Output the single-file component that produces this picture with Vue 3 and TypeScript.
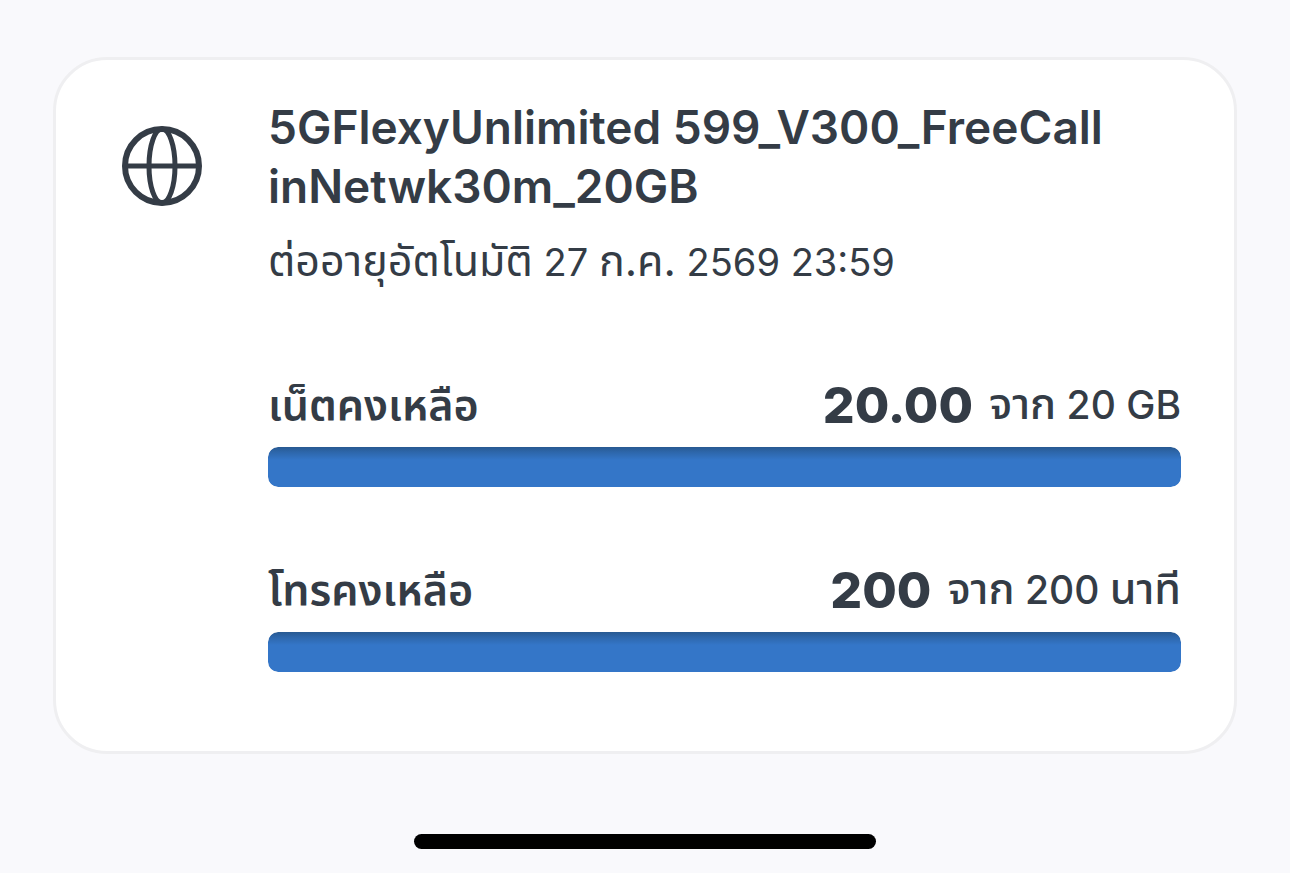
<script setup lang="ts">
interface Piece {
  text: string
  thai: boolean
}

interface Quota {
  id: string
  label: string
  remaining: string
  total: number
  unit: string
}

const titleLines: string[] = ['5GFlexyUnlimited 599_V300_FreeCall', 'inNetwk30m_20GB']
const renewal = 'ต่ออายุอัตโนมัติ 27 ก.ค. 2569 23:59'

const quotas: Quota[] = [
  { id: 'data', label: 'เน็ตคงเหลือ', remaining: '20.00', total: 20, unit: 'GB' },
  { id: 'voice', label: 'โทรคงเหลือ', remaining: '200', total: 200, unit: 'นาที' },
]

const percent = (q: Quota): number => (Number(q.remaining) / q.total) * 100

// Thai letters are set a little larger than the Latin text and digits beside them.
const pieces = (text: string): Piece[] =>
  text
    .split(/([\u0E00-\u0E7F.]+)/)
    .filter((t) => t !== '')
    .map((t) => ({ text: t, thai: /[\u0E00-\u0E7F]/.test(t) }))
</script>

<template>
  <div class="screen">
    <main class="card">
      <svg class="globe" viewBox="0 0 80 80" aria-hidden="true">
        <circle cx="40" cy="40" r="37" />
        <ellipse cx="40" cy="40" rx="13" ry="37" />
        <path d="M3 40H77" />
      </svg>
      <div class="details">
        <h1 class="title">
          <span v-for="line in titleLines" :key="line" class="line">{{ line }}</span>
        </h1>
        <p class="renewal"><span v-for="(p, i) in pieces(renewal)" :key="i" :class="{ thai: p.thai }">{{ p.text }}</span></p>
        <section v-for="q in quotas" :key="q.id" class="quota">
          <div class="row">
            <span :id="q.id" class="label thai">{{ q.label }}</span>
            <span class="amount">
              <strong class="value">{{ q.remaining }}</strong>
              <span class="total"><span v-for="(p, i) in pieces(`จาก ${q.total} ${q.unit}`)" :key="i" :class="{ thai: p.thai }">{{ p.text }}</span></span>
            </span>
          </div>
          <div
            class="track"
            role="progressbar"
            :aria-labelledby="q.id"
            :aria-valuenow="Number(q.remaining)"
            :aria-valuemax="q.total"
          >
            <div class="fill" :style="{ width: percent(q) + '%' }"></div>
          </div>
        </section>
      </div>
    </main>
    <div class="home-indicator"></div>
  </div>
</template>

<style>
body {
  background: #f9f9fc;
}
</style>

<style scoped>
.screen {
  box-sizing: border-box;
  display: flex;
  flex-direction: column;
  justify-content: space-between;
  min-height: 100vh;
  padding: 57px 53px 24px;
  background: #f9f9fc;
  color: #343c46;
  font-family: Inter, "Noto Sans Thai", "Noto Sans", sans-serif;
}
.card {
  display: flex;
  align-items: flex-start;
  gap: 66px;
  padding: 38px 53px 79px 66px;
  border: 3px solid #efeff1;
  border-radius: 54px;
  background: #fff;
}
.globe {
  flex: none;
  width: 80px;
  height: 80px;
  margin-top: 28px;
  fill: none;
  stroke: #343c46;
  stroke-width: 5;
}
.globe circle {
  stroke-width: 6;
}
.details {
  flex: 1;
  min-width: 0;
}
.title {
  margin: 0;
  font-size: 46px;
  font-weight: 600;
  line-height: 59px;
}
.line {
  display: block;
}
.renewal {
  height: 60px;
  margin: 14px 0 80px;
  font-size: 38px;
  line-height: 60px;
}
.thai {
  font-size: 43px;
}
.quota + .quota {
  margin-top: 68px;
}
.row {
  display: flex;
  align-items: center;
  justify-content: space-between;
  height: 68px;
  margin-bottom: 9px;
  font-size: 39px;
  font-weight: 500;
  line-height: 60px;
  white-space: nowrap;
}
.label {
  font-weight: 600;
}
.amount {
  display: flex;
  align-items: center;
  gap: 16px;
}
.value {
  padding-top: 2px;
  font-size: 50px;
  font-weight: 800;
}
.track {
  height: 40px;
  border-radius: 10px;
  background: #e8eaee;
  overflow: hidden;
}
.fill {
  height: 100%;
  border-radius: 10px;
  background: linear-gradient(#285991 0, #2d66aa 5px, #3476c8 13px);
}
.home-indicator {
  align-self: center;
  width: 462px;
  max-width: 60%;
  height: 15px;
  border-radius: 8px;
  background: #000;
}
</style>
